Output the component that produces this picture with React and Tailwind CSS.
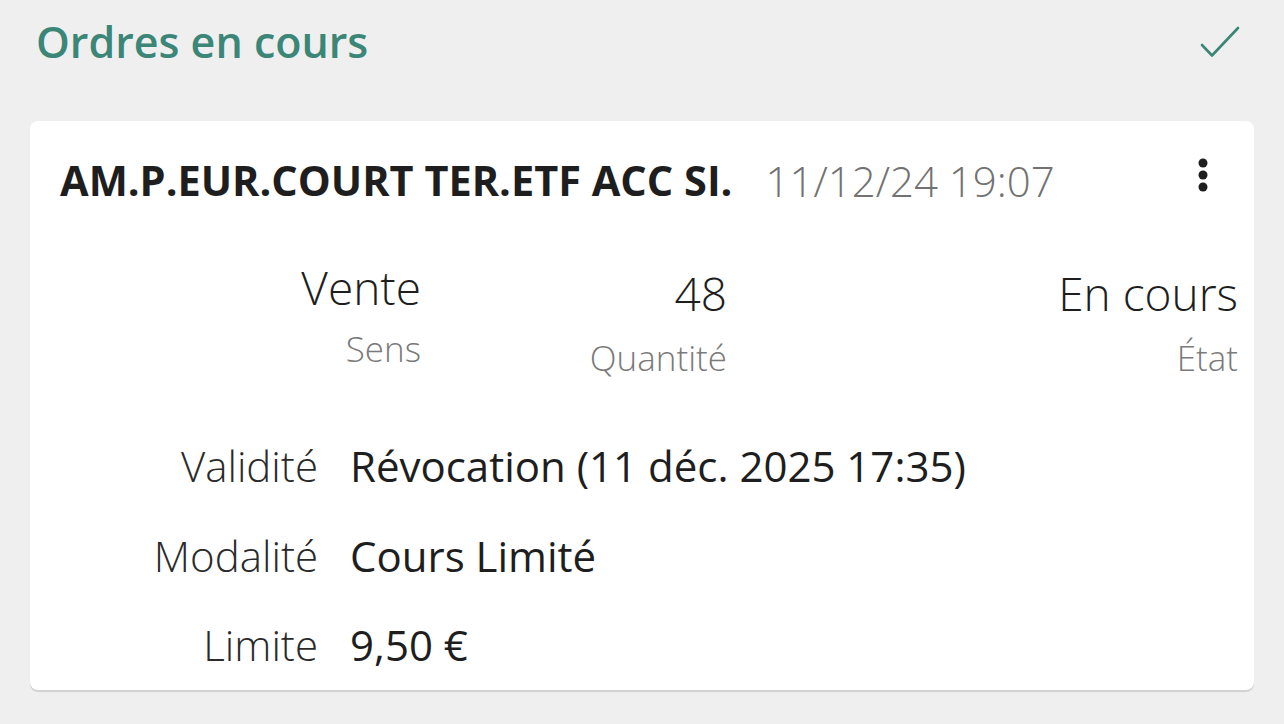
import React from 'react'

const font = { fontFamily: '"Open Sans", "Noto Sans", sans-serif' }

function Kebab() {
  return (
    <svg width="24" height="34" viewBox="0 0 24 34" className="fill-[#1e1e1e]">
      <circle cx="12" cy="5" r="4.5" />
      <circle cx="12" cy="17" r="4.5" />
      <circle cx="12" cy="29" r="4.5" />
    </svg>
  )
}

function Stat({ value, label, top, gap }) {
  return (
    <div className={`text-right ${top}`}>
      <div className="text-[46px] leading-[62px] font-light text-[#1e1e1e]">{value}</div>
      <div className={`text-[35px] leading-[48px] font-light text-[#7a7a7a] ${gap}`}>{label}</div>
    </div>
  )
}

function App() {

  const rows = [
    ['Validité', 'Révocation (11 déc. 2025 17:35)'],
    ['Modalité', 'Cours Limité'],
    ['Limite', '9,50 €'],
  ]

  return (
    <div className="bg-[#efefef] h-[724px] px-[30px] overflow-hidden" style={font}>

      {/* header */}
      <div className="flex justify-between items-start pt-[13px] pl-[6px] pr-[12px]">
        <h1 className="text-[43px] leading-[57px] font-semibold text-[#3b8676]">Ordres en cours</h1>
        <svg width="44" height="34" viewBox="0 0 44 34" fill="none" className="mt-[12px] stroke-[#3b8676]">
          <path d="M4 20 L14 30.5 L40 3" strokeWidth="2.6" strokeLinecap="round" strokeLinejoin="round" />
        </svg>
      </div>

      {/* order card */}
      <div className="mt-[51px] bg-white rounded-[8px] shadow-[0_2px_0_#d2d2d2] pl-[30px] pr-[16px] pt-[31px] pb-[17px]">

        <div className="flex items-start">
          <span className="text-[41.5px] leading-[57px] font-bold text-[#1e1e1e]">AM.P.EUR.COURT TER.ETF ACC SI.</span>
          <span className="ml-[33px] text-[42px] leading-[57px] font-light text-[#727272]">11/12/24 19:07</span>
          <div className="ml-auto mr-[23px] mt-[6px]">
            <Kebab />
          </div>
        </div>

        <div className="grid grid-cols-[361px_306px_1fr] mt-[47px]">
          <Stat value="Vente" label="Sens" top="mt-0" gap="mt-[7px]" />
          <Stat value="48" label="Quantité" top="mt-[6px]" gap="mt-[10px]" />
          <Stat value="En cours" label="État" top="mt-[6px]" gap="mt-[10px]" />
        </div>

        <div className="grid grid-cols-[258px_1fr] gap-x-[32px] gap-y-[32.5px] mt-[55px]">
          {rows.map(([k, v]) => (
            <React.Fragment key={k}>
              <div className="text-right text-[42px] leading-[57px] font-light text-[#2a2a2a]">{k}</div>
              <div className="text-[42px] leading-[57px] font-normal text-[#1e1e1e]">{v}</div>
            </React.Fragment>
          ))}
        </div>

      </div>
    </div>
  )
}

export default App
